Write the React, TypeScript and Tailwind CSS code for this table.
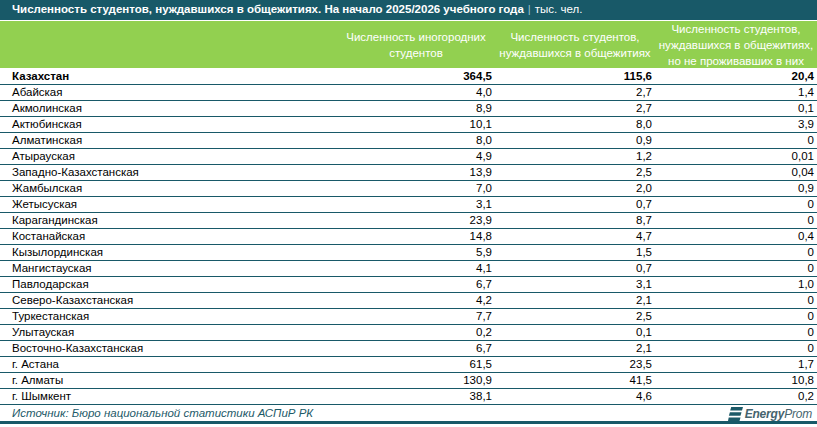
const ROWS: [string, string, string, string][] = [
  ['Абайская', '4,0', '2,7', '1,4'],
  ['Акмолинская', '8,9', '2,7', '0,1'],
  ['Актюбинская', '10,1', '8,0', '3,9'],
  ['Алматинская', '8,0', '0,9', '0'],
  ['Атырауская', '4,9', '1,2', '0,01'],
  ['Западно-Казахстанская', '13,9', '2,5', '0,04'],
  ['Жамбылская', '7,0', '2,0', '0,9'],
  ['Жетысуская', '3,1', '0,7', '0'],
  ['Карагандинская', '23,9', '8,7', '0'],
  ['Костанайская', '14,8', '4,7', '0,4'],
  ['Кызылординская', '5,9', '1,5', '0'],
  ['Мангистауская', '4,1', '0,7', '0'],
  ['Павлодарская', '6,7', '3,1', '1,0'],
  ['Северо-Казахстанская', '4,2', '2,1', '0'],
  ['Туркестанская', '7,7', '2,5', '0'],
  ['Улытауская', '0,2', '0,1', '0'],
  ['Восточно-Казахстанская', '6,7', '2,1', '0'],
  ['г. Астана', '61,5', '23,5', '1,7'],
  ['г. Алматы', '130,9', '41,5', '10,8'],
  ['г. Шымкент', '38,1', '4,6', '0,2'],
];

const COLS = 'grid grid-cols-[333px_162px_160px_162px]';

function Logo() {
  return (
    <div className="flex items-center gap-[2px] text-[#45636d]">
      <svg width="15" height="14" viewBox="0 0 15 14">
        <polygon points="3.2,0 15,0 14,3.6 2.2,3.6" fill="#1d5a68" />
        <polygon points="1.9,5.2 13.5,5.2 12.5,8.8 0.9,8.8" fill="#1d5a68" />
        <polygon points="0.7,10.4 12.5,10.4 11.5,14 0,14" fill="#1d5a68" />
      </svg>
      <span className="text-[12px] italic leading-none tracking-[-0.2px]">
        <span className="font-bold">Energy</span>Prom
      </span>
    </div>
  );
}

export default function App() {
  return (
    <div className="w-[817px] h-[427px] bg-white font-['Liberation_Sans',sans-serif] text-[11.5px] text-black overflow-hidden">
      <div className="h-[20px] bg-[#185968] flex items-center px-[12px] text-white text-[11.5px]">
        <span className="font-bold">
          Численность студентов, нуждавшихся в общежитиях. На начало 2025/2026 учебного года
        </span>
        <span className="mx-[4px] text-[#9fc3d0]">|</span>
        <span>тыс. чел.</span>
      </div>
      <div className={`${COLS} mt-[1px] h-[47px] bg-[#92d050] text-white text-center`}>
        <div />
        <div className="flex items-center justify-center pl-[4px] leading-[16px]">
          Численность иногородних
          <br />
          студентов
        </div>
        <div className="flex items-center justify-center leading-[16px]">
          Численность студентов,
          <br />
          нуждавшихся в общежитиях
        </div>
        <div className="flex items-center justify-center leading-[16px]">
          Численность студентов,
          <br />
          нуждавшихся в общежитиях,
          <br />
          но не проживавших в них
        </div>
      </div>
      <div className={`${COLS} h-[17px] pt-[2px] border-b border-[#185968] font-bold items-center leading-none`}>
        <div className="pl-[12px]">Казахстан</div>
        <div className="text-right pr-[3px]">364,5</div>
        <div className="text-right pr-[3px]">115,6</div>
        <div className="text-right pr-[3px]">20,4</div>
      </div>
      {ROWS.map(([name, a, b, c]) => (
        <div key={name} className={`${COLS} h-[16px] pt-[1px] border-b border-[#185968] items-center leading-none`}>
          <div className="pl-[12px]">{name}</div>
          <div className="text-right pr-[3px]">{a}</div>
          <div className="text-right pr-[3px]">{b}</div>
          <div className="text-right pr-[3px]">{c}</div>
        </div>
      ))}
      <div className="h-[19px] flex items-center justify-between pl-[12px] pr-[5px] pt-[1px] border-b-[3px] border-[#185968]">
        <span className="italic text-[#1d5a68]">Источник: Бюро национальной статистики АСПиР РК</span>
        <Logo />
      </div>
    </div>
  );
}
